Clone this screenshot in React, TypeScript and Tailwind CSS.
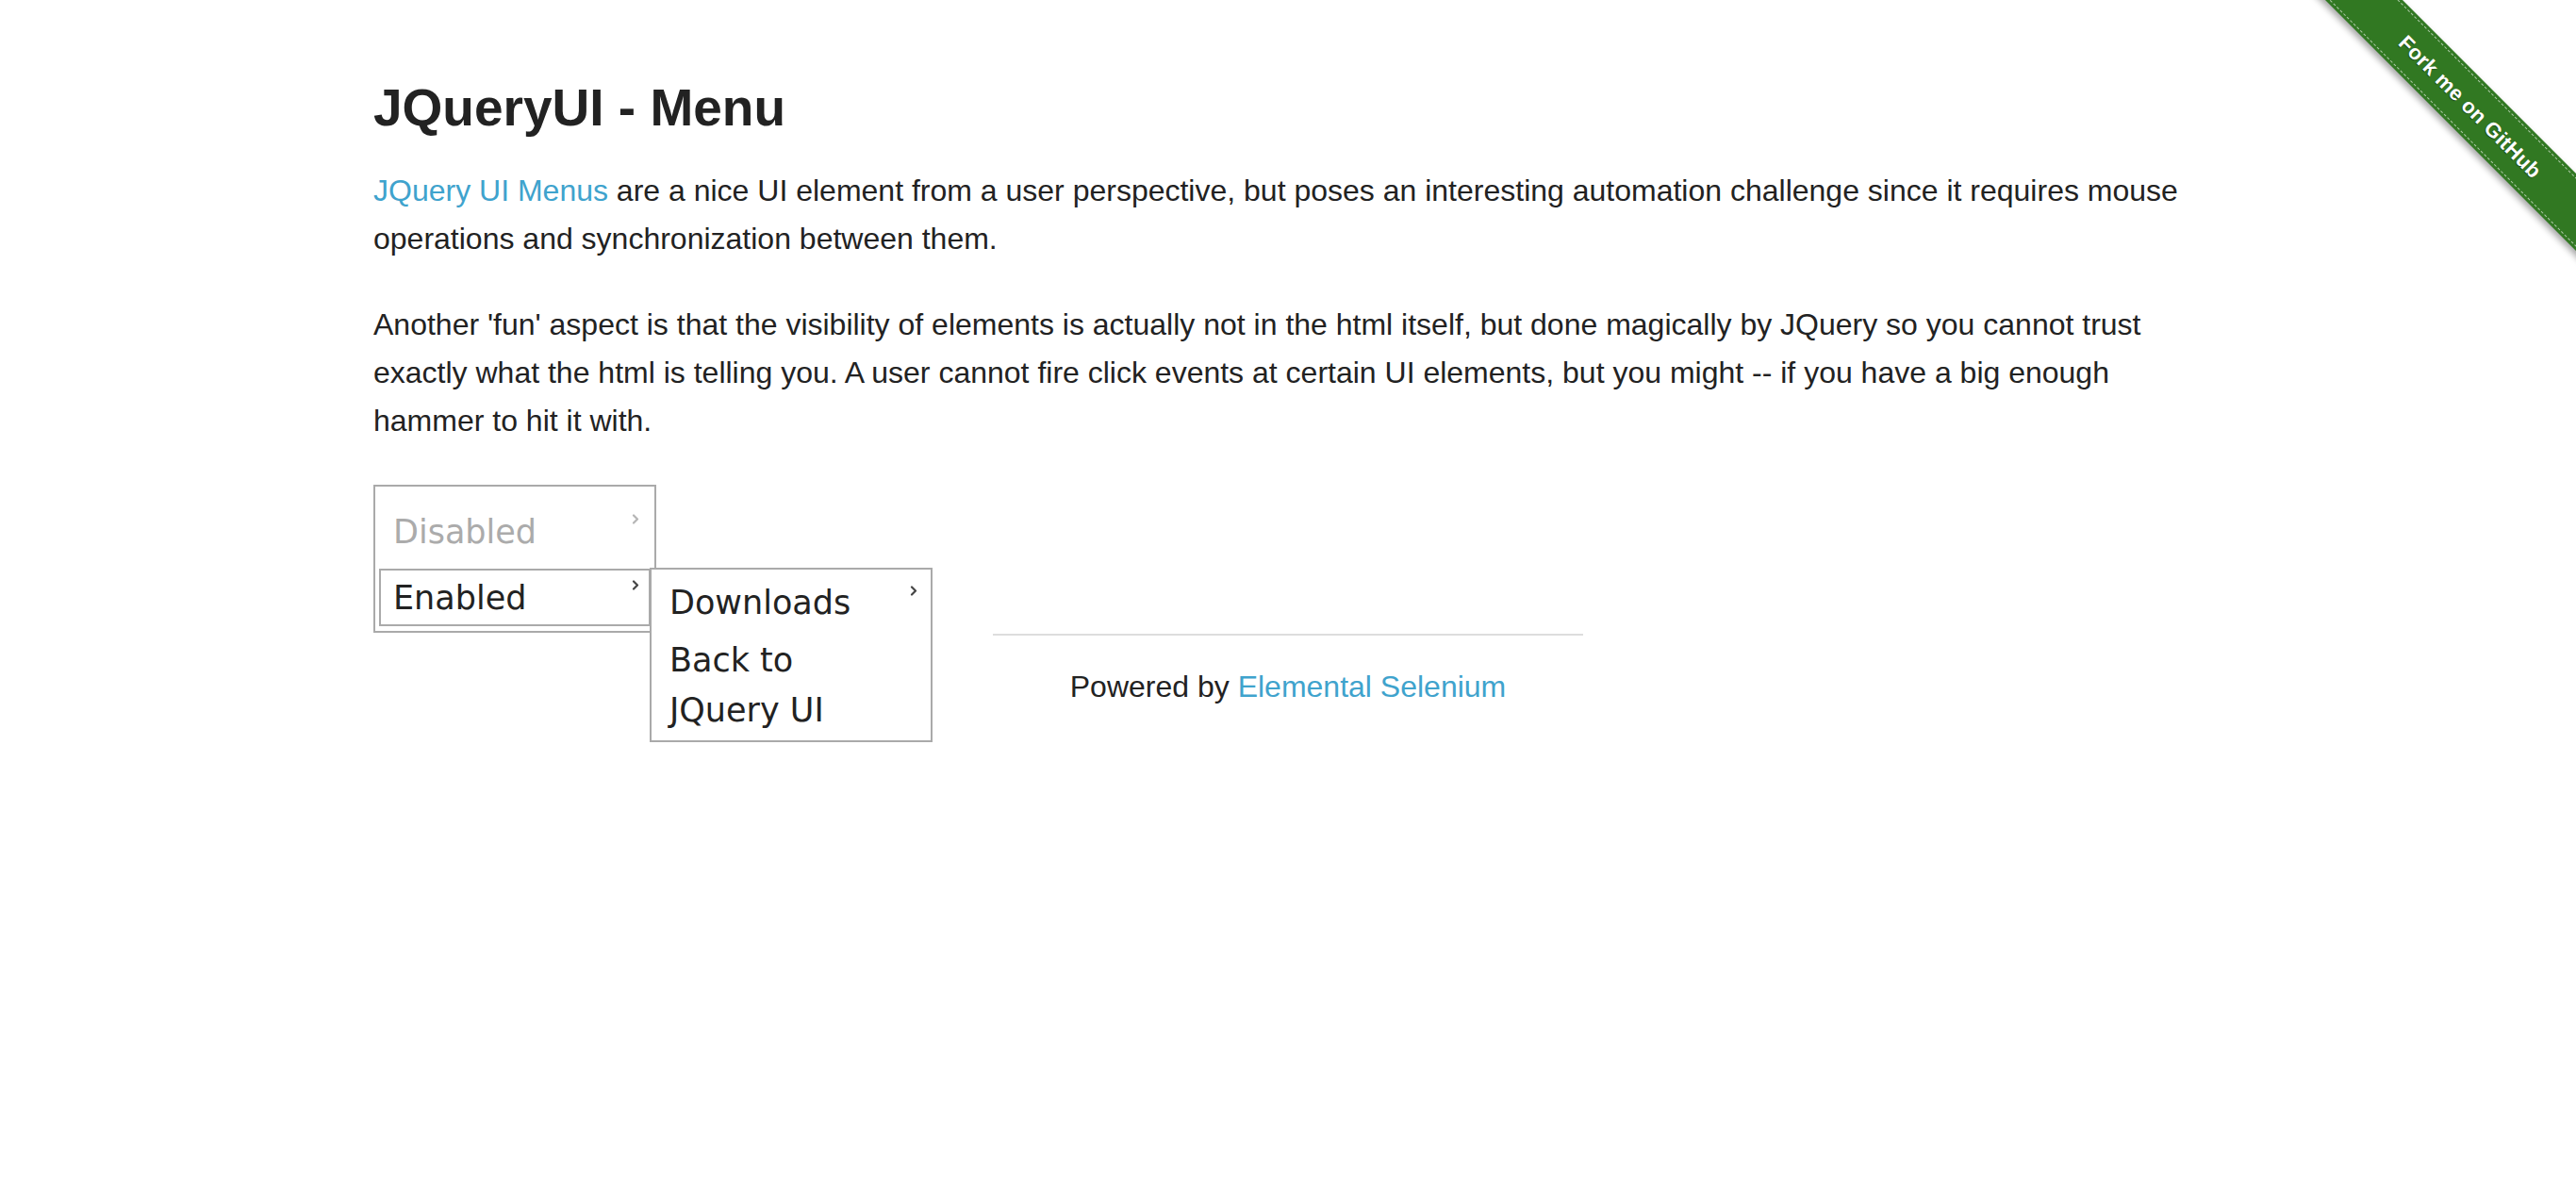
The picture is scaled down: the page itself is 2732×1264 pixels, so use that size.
import React from 'react';

// small caret used by the jQuery UI menu
function Caret({ className }: { className: string }) {
  return (
    <svg width="8" height="11" viewBox="0 0 8 11" className={className} fill="none">
      <polyline points="2,1.5 6,5.5 2,9.5" stroke="currentColor" strokeWidth="2.2" strokeLinecap="round" strokeLinejoin="round" />
    </svg>
  );
}

function ForkRibbon() {
  return (
    <div className="absolute top-0 right-0 w-[298px] h-[298px] overflow-hidden pointer-events-none">
      <div className="absolute left-[-24px] top-[84px] w-[420px] h-[58px] rotate-45 bg-[#317822] shadow-[0_4px_7px_rgba(0,0,0,0.35)] flex items-center justify-center">
        <div className="absolute inset-x-0 top-[3px] bottom-[3px] border-y border-dashed border-white/60" />
        <span className="relative text-white text-[22px] font-bold tracking-[0.3px] [text-shadow:0_1px_1px_rgba(0,0,0,0.4)]">
          Fork me on GitHub
        </span>
      </div>
    </div>
  );
}

function JQueryMenu() {
  return (
    <div className="w-[300px] border-2 border-[#aaaaaa] bg-white px-[4px] pt-[4px] pb-[5px] font-['DejaVu_Sans',Verdana,sans-serif] text-[35px] leading-[53px]">
      {/* disabled item */}
      <div className="flex justify-between items-start pl-[15px] pr-[12px] pt-[18px] pb-[12px] text-[#ababab]">
        <span>Disabled</span>
        <Caret className="mt-[7px] shrink-0 text-[#b5b5b5]" />
      </div>

      {/* enabled item, currently open */}
      <div className="relative flex justify-between items-start border-2 border-[#aaaaaa] pl-[13px] pr-[10px] pt-[3px] pb-[1px] text-[#222]">
        <span>Enabled</span>
        <Caret className="mt-[7px] shrink-0 text-[#454545]" />

        <div className="absolute left-[calc(100%+1px)] top-[-3px] w-[300px] border-2 border-[#aaaaaa] bg-white px-[4px] pt-[5px] pb-[1px] z-10">
          <div className="flex justify-between items-start pl-[15px] pr-[10px] py-[4px]">
            <span>Downloads</span>
            <Caret className="mt-[8px] shrink-0 text-[#454545]" />
          </div>
          <div className="pl-[15px] pr-[35px] py-[4px]">Back to JQuery UI</div>
        </div>
      </div>
    </div>
  );
}

export default function App() {
  return (
    <div className="relative min-h-[1264px] bg-white text-[#222] font-['Liberation_Sans',Helvetica,Arial,sans-serif]">
      <ForkRibbon />

      <div className="mx-auto w-[2000px] px-[30px] pt-[82px] flex flex-col">
        <h3 className="text-[55px] leading-[65px] font-bold text-[#222]">JQueryUI - Menu</h3>

        <p className="mt-[30px] text-[32px] leading-[51px]">
          <a className="text-[#3fa3cd]">JQuery UI Menus</a> are a nice UI element from a user perspective, but poses an
          interesting automation challenge since it requires mouse operations and synchronization between them.
        </p>

        <p className="mt-[40px] text-[32px] leading-[51px]">
          Another 'fun' aspect is that the visibility of elements is actually not in the html itself, but done
          magically by JQuery so you cannot trust exactly what the html is telling you. A user cannot fire click
          events at certain UI elements, but you might -- if you have a big enough hammer to hit it with.
        </p>

        <div className="mt-[42px]">
          <JQueryMenu />
        </div>
      </div>

      {/* footer */}
      <div className="mx-auto w-[626px] mt-[1px] flex flex-col items-center">
        <hr className="w-full border-0 h-[2px] bg-[#dddddd]" />
        <div className="mt-[29px] text-center text-[32px] leading-[51px]">
          Powered by <a className="text-[#3fa3cd]">Elemental Selenium</a>
        </div>
      </div>
    </div>
  );
}
